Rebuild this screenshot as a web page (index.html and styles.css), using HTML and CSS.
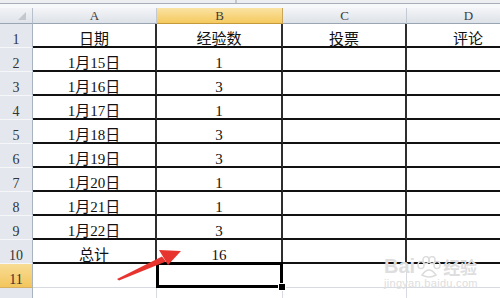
FILE: index.html
```html
<!DOCTYPE html>
<html>
<head>
<meta charset="utf-8">
<link rel="stylesheet" href="styles.css">
</head>
<body>
<div class="sheet">
  <div class="topbar"><span class="tick"></span></div>
  <div class="grid">
    <div class="corner"><span class="tri"></span></div>
    <div class="ch">A</div>
    <div class="ch on">B</div>
    <div class="ch">C</div>
    <div class="ch">D</div>

    <div class="rh">1</div><div class="c">日期</div><div class="c">经验数</div><div class="c">投票</div><div class="c">评论</div>
    <div class="rh">2</div><div class="c">1月15日</div><div class="c">1</div><div class="c"></div><div class="c"></div>
    <div class="rh">3</div><div class="c">1月16日</div><div class="c">3</div><div class="c"></div><div class="c"></div>
    <div class="rh">4</div><div class="c">1月17日</div><div class="c">1</div><div class="c"></div><div class="c"></div>
    <div class="rh">5</div><div class="c">1月18日</div><div class="c">3</div><div class="c"></div><div class="c"></div>
    <div class="rh">6</div><div class="c">1月19日</div><div class="c">3</div><div class="c"></div><div class="c"></div>
    <div class="rh">7</div><div class="c">1月20日</div><div class="c">1</div><div class="c"></div><div class="c"></div>
    <div class="rh">8</div><div class="c">1月21日</div><div class="c">1</div><div class="c"></div><div class="c"></div>
    <div class="rh">9</div><div class="c">1月22日</div><div class="c">3</div><div class="c"></div><div class="c"></div>
    <div class="rh">10</div><div class="c">总计</div><div class="c">16</div><div class="c"></div><div class="c"></div>
    <div class="rh on">11</div><div class="g"></div><div class="g sel"></div><div class="g"></div><div class="g"></div>
    <div class="rh"></div><div class="g"></div><div class="g"></div><div class="g"></div><div class="g"></div>
  </div>

  <svg class="arrow" width="500" height="298" viewBox="0 0 500 298">
    <path d="M117 279 L162 256.5 L166 261.5 L119 280.5 Z" fill="#e8342f"/>
    <path d="M159 250 L181 251 L168 265 Z" fill="#e8342f"/>
  </svg>

  <div class="wm">
    <div class="wm-top"><span class="wm-bai">Bai</span><svg class="paw" width="26" height="22" viewBox="0 0 26 22"><ellipse cx="5" cy="9" rx="3" ry="3.6" fill="none" stroke="#dcdcdc" stroke-width="1.5"/><ellipse cx="10" cy="4" rx="3" ry="3.4" fill="none" stroke="#dcdcdc" stroke-width="1.5"/><ellipse cx="16" cy="4" rx="3" ry="3.4" fill="none" stroke="#dcdcdc" stroke-width="1.5"/><ellipse cx="21" cy="9" rx="3" ry="3.6" fill="none" stroke="#dcdcdc" stroke-width="1.5"/><path d="M6 19 Q13 9 20 19 Q13 23 6 19 Z" fill="none" stroke="#dcdcdc" stroke-width="1.5"/></svg><span class="wm-jy">经验</span></div>
    <div class="wm-url">jingyan.baidu.com</div>
  </div>
</div>
</body>
</html>
```

FILE: styles.css
```css
* { box-sizing: border-box; }
html, body { margin: 0; padding: 0; background: #ffffff; }
.sheet {
  position: relative;
  width: 500px;
  height: 298px;
  overflow: hidden;
  background: #ffffff;
}
.topbar {
  position: relative;
  height: 8px;
  background: linear-gradient(#eceef1 0, #eceef1 3px, #a8afb8 3px, #a8afb8 4px, #f7f8f9 4px);
}
.tick {
  position: absolute;
  left: 235px;
  top: 0;
  width: 2px;
  height: 3px;
  background: #c4c8ce;
}
.grid {
  display: grid;
  grid-template-columns: 33px 124px 126px 124px 124px;
  grid-template-rows: 16px repeat(11, 24px) 24px;
}
.corner {
  position: relative;
  background: linear-gradient(#f1f3f6, #dfe3e9);
  border-right: 1px solid #b8c0cb;
  border-bottom: 1px solid #9aa5b3;
}
.tri {
  position: absolute;
  right: 6px;
  bottom: 3px;
  width: 0;
  height: 0;
  border-left: 8px solid transparent;
  border-bottom: 8px solid #c3c8cf;
}
.ch {
  background: linear-gradient(#f4f5f8, #dde2e8);
  border-right: 1px solid #c3cad4;
  border-bottom: 1px solid #9aa5b3;
  font: 13px "Liberation Serif", serif;
  color: #3c3c3c;
  display: flex;
  align-items: center;
  justify-content: center;
  line-height: 14px;
  padding-top: 1px;
}
.ch.on {
  background: linear-gradient(#fbe3a4, #f4c95e);
  border-right-color: #c9a65a;
  border-bottom-color: #c59a3c;
}
.rh {
  background: #e4e8ee;
  border-right: 1px solid #a9b3c0;
  border-bottom: 1px solid #f6f7f9;
  font: 14px "Liberation Serif", serif;
  color: #333;
  display: flex;
  align-items: flex-end;
  justify-content: center;
  line-height: 14px;
  padding-bottom: 0;
}
.rh.on {
  background: linear-gradient(#f8dc95, #f3c65c);
  border-bottom-color: #d9b060;
}
.c {
  border-right: 2px solid #2e2e2e;
  border-bottom: 2px solid #111;
  font: 15px "Liberation Serif", "Noto Sans CJK SC", serif;
  color: #111;
  display: flex;
  align-items: flex-end;
  justify-content: center;
  line-height: 13px;
  padding-bottom: 0;
}
.g {
  border-right: 1px solid #d7dbe1;
  border-bottom: 1px solid #d7dbe1;
}
.sel { position: relative; }
.sel::before {
  content: "";
  position: absolute;
  left: -1px;
  top: -2px;
  right: -1px;
  bottom: -1px;
  border: 3px solid #000;
}
.sel::after {
  content: "";
  position: absolute;
  right: -4px;
  bottom: -4px;
  width: 6px;
  height: 6px;
  background: #000;
  border: 1px solid #fff;
}
.arrow {
  position: absolute;
  left: 0;
  top: 0;
}
.wm {
  position: absolute;
  left: 384px;
  top: 254px;
  color: #dedede;
  font-family: "Liberation Sans", sans-serif;
}
.wm-top {
  display: flex;
  align-items: center;
  gap: 1px;
}
.wm-bai {
  font-size: 20px;
  font-weight: bold;
}
.wm-jy {
  font: bold 17px "Noto Sans CJK SC", sans-serif;
}
.wm-url {
  font-size: 11px;
  margin-top: -2px;
  letter-spacing: 0.3px;
}
```
